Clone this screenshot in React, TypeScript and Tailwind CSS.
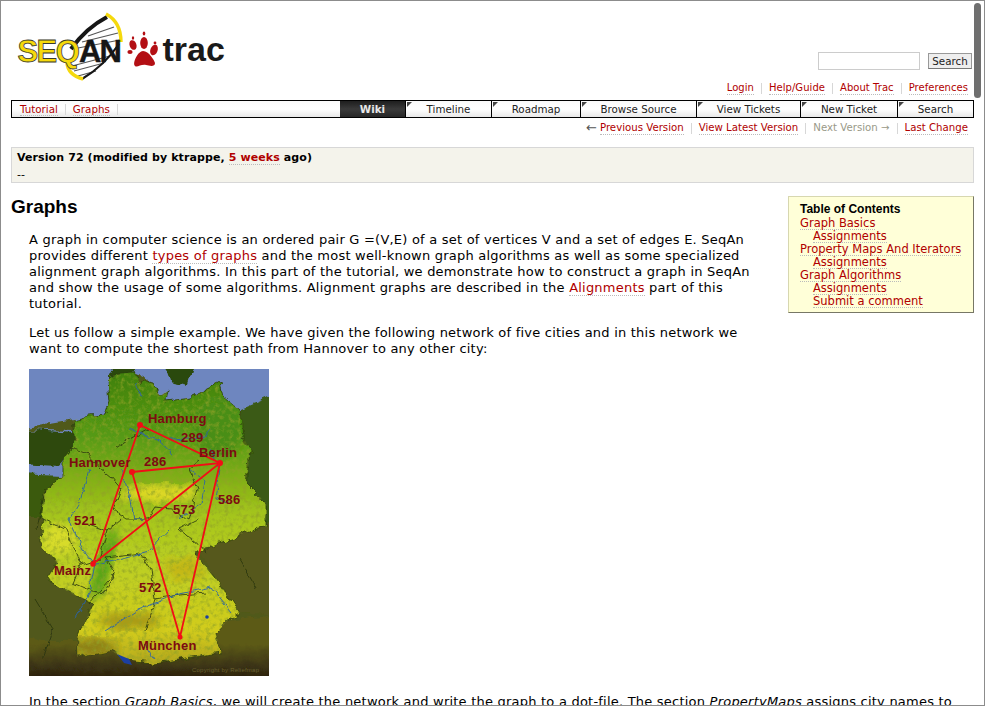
import React from "react";

const Lnk = ({ children, className = "" }: { children: React.ReactNode; className?: string }) => (
  <a className={"text-[#b00000] border-b border-dotted border-[#bbbbbb] " + className}>{children}</a>
);

function Logo() {
  return (
    <svg width="220" height="90" viewBox="11 5 220 90" className="block mt-[4px]">
      <path d="M72 47 Q88 28 107 17 L120 43 Q104 66 83 79 Q74 70 67 63 Z" fill="#fff" />
      <g stroke="#555" strokeWidth="1.1">
        <path d="M88 36 L114 27" /><path d="M82 42 L118 33" /><path d="M78 48 L120 40" /><path d="M72 66 L110 56" /><path d="M74 71 L104 63" /><path d="M78 76 L96 71" />
      </g>
      <path d="M71 49 Q86 28 107 17" fill="none" stroke="#161616" strokeWidth="4" />
      <path d="M119 44 Q104 66 82 79" fill="none" stroke="#161616" strokeWidth="2.2" />
      <path d="M106 14 Q121 22 121 42" fill="none" stroke="#f5d90c" strokeWidth="3.4" />
      <path d="M67 63 Q68 75 83 79" fill="none" stroke="#f5d90c" strokeWidth="3.4" />
      <text x="17.5" y="62" fontFamily="'Liberation Sans',sans-serif" fontWeight="700" fontSize="31" letterSpacing="-1.6" fill="#f5d90c" stroke="#3a3a2a" strokeWidth="0.8">SEQ</text>
      <text x="79" y="62" fontFamily="'Liberation Sans',sans-serif" fontWeight="700" fontSize="31" letterSpacing="-2" fill="#161616" stroke="#161616" strokeWidth="0.4">AN</text>
      <g fill="#b30f14">
        <path d="M143 51 C149 51 154 60 155 63 C155 67 150 66 146 65 C141 64 137 68 135 66 C132 63 138 51 143 51Z" />
        <ellipse cx="144" cy="43" rx="3.8" ry="6" />
        <ellipse cx="133" cy="45" rx="3.4" ry="5" transform="rotate(-20 133 45)" />
        <ellipse cx="154" cy="50" rx="3.6" ry="5.5" transform="rotate(20 154 50)" />
        <ellipse cx="130" cy="52" rx="2.6" ry="2" />
        <ellipse cx="144" cy="33.5" rx="1.3" ry="2" />
        <ellipse cx="133" cy="38" rx="1.2" ry="1.8" />
        <ellipse cx="155" cy="43" rx="1.4" ry="1.4" />
      </g>
      <text x="162.5" y="61" fontFamily="'Liberation Sans',sans-serif" fontWeight="700" fontSize="34" fill="#1a1a1a">trac</text>
    </svg>
  );
}

const land =
  "M44 51 L60 47 L76 46 L81 31 L79 11 L84 6 L104 4 L112 14 L124 14 L131 27 L139 21 L137 32 L161 29 L177 21 L191 14 L194 27 L211 41 L212 64 L221 81 L217 114 L237 134 L237 157 L229 158 L204 169 L171 181 L166 184 L191 214 L211 244 L199 251 L187 264 L191 284 L164 288 L124 294 L97 291 L81 281 L48 288 L48 271 L64 234 L41 224 L18 209 L28 194 L11 174 L14 151 L14 124 L34 107 L34 91 L47 71 Z";

function GermanyMap() {
  const bold = { fontFamily: "'Liberation Sans',sans-serif", fontWeight: 700 } as const;
  const L = (x: number, y: number, t: string) => (
    <text x={x} y={y} fontSize="13" fill="#7d0a12" {...bold}>{t}</text>
  );
  return (
    <svg width="240" height="307" viewBox="0 0 240 307" className="block">
      <defs>
        <linearGradient id="g" gradientUnits="userSpaceOnUse" x1="0" y1="0" x2="0" y2="307">
          <stop offset="0" stopColor="#3f7f10" />
          <stop offset="0.22" stopColor="#569a12" />
          <stop offset="0.36" stopColor="#82b016" />
          <stop offset="0.48" stopColor="#a6c61c" />
          <stop offset="0.64" stopColor="#bccf22" />
          <stop offset="0.85" stopColor="#d2cc1c" />
          <stop offset="1" stopColor="#a8981a" />
        </linearGradient>
        <linearGradient id="alps" gradientUnits="userSpaceOnUse" x1="0" y1="275" x2="0" y2="307">
          <stop offset="0" stopColor="#5c5a18" />
          <stop offset="1" stopColor="#2e2410" />
        </linearGradient>
        <filter id="noise" x="0" y="0" width="100%" height="100%">
          <feTurbulence type="fractalNoise" baseFrequency="0.22" numOctaves="4" seed="4" />
          <feColorMatrix values="0 0 0 0 0.28 0 0 0 0 0.36 0 0 0 0 0.02 0 0 0 1.8 -0.8" />
        </filter>
        <filter id="rough" x="-5%" y="-5%" width="110%" height="110%">
          <feTurbulence type="fractalNoise" baseFrequency="0.09" numOctaves="3" seed="7" result="t" />
          <feDisplacementMap in="SourceGraphic" in2="t" scale="9" xChannelSelector="R" yChannelSelector="G" />
        </filter>
        <filter id="wob" x="-5%" y="-5%" width="110%" height="110%">
          <feTurbulence type="fractalNoise" baseFrequency="0.12" numOctaves="2" seed="11" result="t" />
          <feDisplacementMap in="SourceGraphic" in2="t" scale="6" xChannelSelector="R" yChannelSelector="G" />
        </filter>
        <filter id="b"><feGaussianBlur stdDeviation="5" /></filter>
        <clipPath id="c"><path d={land} /></clipPath>
      </defs>
      <rect width="240" height="307" fill="#50591a" />
      <g filter="url(#rough)">
        <path d="M-10 -10 H250 V30 L211 41 L194 27 L191 14 L177 21 L161 29 L137 32 L131 27 L124 14 L104 4 L84 6 L79 11 L81 31 L76 46 L44 51 L-10 60 Z" fill="#6e86bf" />
        <path d="M-10 60 L44 62 L46 71 L34 91 L34 107 L-10 110Z" fill="#6e86bf" />
        <path d="M-10 60 L46 64 L46 90 L34 91 L30 97 L-10 95Z" fill="#2d4a0c" />
        <path d="M80 -10 L110 -10 L103 8 L84 8Z M133 -10 L168 -10 L160 16 L140 12Z" fill="#2c4a0c" />
        <path d="M212 40 L250 24 V170 L232 158 L237 134 L217 114 L221 81 L212 64Z" fill="#3a5a12" />
        <path d="M170 181 L250 150 V245 L211 244 L191 214Z" fill="#56581a" />
        <path d="M-10 317 V270 L48 271 L48 288 L81 281 L97 291 L124 294 L164 288 L191 284 L187 264 L199 251 L250 245 V317Z" fill="url(#alps)" />
        <path d="M-10 120 L14 124 L14 151 L11 174 L28 194 L18 209 L41 224 L64 234 L48 271 L-10 270Z" fill="#51591a" />
        <path d="M-10 105 L34 107 L14 124 L14 150 L-10 150Z" fill="#3a5a10" />
        <path d={land} fill="url(#g)" stroke="#2a3a0c" strokeWidth="0.8" />
        <g clipPath="url(#c)">
          <ellipse cx="75" cy="195" rx="8" ry="38" fill="#4fa014" filter="url(#b)" transform="rotate(15 75 195)" />
          <ellipse cx="130" cy="124" rx="40" ry="8" fill="#e2da28" filter="url(#b)" />
          <ellipse cx="60" cy="278" rx="28" ry="9" fill="#8c8016" filter="url(#b)" />
          <ellipse cx="100" cy="252" rx="30" ry="9" fill="#a89a18" filter="url(#b)" />
          <ellipse cx="155" cy="200" rx="20" ry="12" fill="#c4b816" filter="url(#b)" />
          <ellipse cx="190" cy="60" rx="24" ry="30" fill="#4a8e12" filter="url(#b)" />
          <ellipse cx="30" cy="170" rx="18" ry="16" fill="#d8dc2c" filter="url(#b)" />
        </g>
      </g>
      <g clipPath="url(#c)"><rect width="240" height="307" filter="url(#noise)" /></g>
      <g filter="url(#wob)">
        <g fill="none" stroke="#26340e" strokeWidth="0.8">
          <path d="M40 80 L58 84 L72 100 L82 108 L92 120 L84 140 L98 150 L118 150 L126 138 L142 140 L160 150 L168 120 L160 100 L170 92" />
          <path d="M60 155 L78 162 L92 150 M78 162 L70 190 L52 196 L44 214 L62 222 L76 224 L86 205 L76 188 L112 184 L122 200 L126 230 L116 262" />
          <path d="M126 230 L150 226 L178 224 M178 184 L150 160 L170 150 M120 60 L98 72 L86 80 M6 230 L24 260 L14 290 M210 190 L228 220 M16 120 L8 160" />
          <path d="M14 150 L36 160 L52 196 M60 235 L86 205" />
        </g>
        <g fill="none" stroke="#2b62a8" strokeWidth="0.9">
          <path d="M106 15 L112 28 M100 60 L130 72 L145 86 M140 70 L175 68 L182 60 M182 80 L190 100 L186 130 L200 132" />
          <path d="M92 100 L100 125 L104 150 L116 150 M60 100 L52 130 L40 150 L54 180 L66 195 L60 225 L46 250 M66 195 L90 190 L120 182 L140 160" />
          <path d="M76 262 L110 240 L150 225 L182 218 L202 244 M125 290 L115 275" />
          <path d="M160 100 L176 112 L172 135 L150 150" />
        </g>
      </g>
      <path d="M88 285 L100 290 L103 296 L95 294Z" fill="#1c3fa0" />
      <circle cx="178" cy="248" r="1.8" fill="#1c3fa0" />
      <text x="163" y="303" fontSize="6" fill="#6a6030" fontFamily="'Liberation Sans',sans-serif">Copyright by Reliefmap</text>
      <g stroke="#f20d16" strokeWidth="1.8" fill="none">
        <path d="M111 56 L191 94 L64 195 L111 56" />
        <path d="M103 103 L191 94 L151 268 L103 103" />
      </g>
      <g fill="#f20d16">
        <circle cx="111" cy="56" r="3" /><circle cx="191" cy="94" r="3" /><circle cx="103" cy="103" r="3" /><circle cx="64" cy="195" r="2.7" /><circle cx="151" cy="268" r="2.5" />
      </g>
      {L(119, 54, "Hamburg")}
      {L(152, 73, "289")}
      {L(170, 88, "Berlin")}
      {L(40, 98, "Hannover")}
      {L(115, 97, "286")}
      {L(189, 135, "586")}
      {L(144, 145, "573")}
      {L(45, 156, "521")}
      {L(25, 206, "Mainz")}
      {L(110, 223, "572")}
      {L(109, 281, "München")}
    </svg>
  );
}

const tabs: [string, string][] = [
  ["Timeline", "w-[85px]"],
  ["Roadmap", "w-[89px]"],
  ["Browse Source", "w-[116px]"],
  ["View Tickets", "w-[104px]"],
  ["New Ticket", "w-[97px]"],
  ["Search", "w-[76px]"],
];

const Sep = () => <span className="w-px h-[11px] bg-[#d7d7d7] mx-[7px]" />;

export default function App() {
  return (
    <div
      className="relative h-[706px] w-[985px] overflow-hidden border border-[#8c8c8c] bg-white px-[10px] text-black"
      style={{ fontFamily: "'DejaVu Sans',Verdana,sans-serif" }}
    >
      <div className="absolute right-[3px] top-[2px] h-[95px] w-[7px] rounded-full bg-[#6f6f6f]" />

      <header className="flex h-[99px] justify-between">
        <Logo />
        <div className="flex flex-col items-end pr-[6px] pt-[51px]">
          <div className="flex items-center">
            <input className="h-[18px] w-[102px] border border-[#cccccc] bg-white" />
            <button className="ml-2 mr-[-4px] h-[16px] w-[44px] border border-[#999] border-b-[#777] bg-[#eeeeee] text-[10.3px] leading-[14px] text-[#222]">
              Search
            </button>
          </div>
          <nav className="mt-[11px] flex items-center text-[10px] leading-[13px] tracking-[0.05px]">
            <Lnk>Login</Lnk><Sep /><Lnk>Help/Guide</Lnk><Sep /><Lnk>About Trac</Lnk><Sep /><Lnk>Preferences</Lnk>
          </nav>
        </div>
      </header>

      <nav className="flex h-[18px] border border-black bg-gradient-to-b from-[#fafafa] via-white to-[#e8e8e8] text-[10.3px] leading-[16px]">
        <div className="flex flex-1 items-center pl-[8px]">
          <Lnk className="leading-[12px]">Tutorial</Lnk>
          <span className="mx-[7px] h-[11px] w-px bg-[#d7d7d7]" />
          <Lnk className="leading-[12px]">Graphs</Lnk>
          <span className="ml-[7px] h-[11px] w-px bg-[#d7d7d7]" />
        </div>
        <div className="w-[66px] border-r border-black bg-gradient-to-b from-[#1e1e1e] via-[#3a3a3a] to-[#262626] text-center font-bold text-[#e8e8e8]">
          Wiki
        </div>
        {tabs.map(([t, w], i) => (
          <div key={t} className={"relative text-center text-[#222] " + w + (i ? " border-l border-black" : "")}>
            <span className="absolute left-[1px] top-[1px] h-0 w-0 border-r-[5px] border-t-[5px] border-r-transparent border-t-[#444]" />
            {t}
          </div>
        ))}
      </nav>

      <nav className="mt-[2px] flex h-[16px] items-center justify-end pr-[6px] text-[10.2px] leading-[12px]">
        <span className="mr-[3px] text-[13px] text-[#555]">←</span>
        <Lnk>Previous Version</Lnk><Sep /><Lnk>View Latest Version</Lnk><Sep />
        <span className="text-[#999988]">Next Version →</span><Sep /><Lnk>Last Change</Lnk>
      </nav>

      <section className="mt-[11px] h-[36px] border border-[#d7d7d7] bg-[#f4f3eb] px-[5px] pt-[2px] text-[11px] leading-[16px] tracking-[0.1px]">
        <p className="font-bold">
          Version 72 (modified by ktrappe, <Lnk>5 weeks</Lnk> ago)
        </p>
        <p className="mt-[1px]">--</p>
      </section>

      <div className="flex items-start">
        <main className="min-w-0 flex-1">
          <h1 className="mt-[12px] text-[19px] font-bold leading-[24px]" style={{ fontFamily: "'Liberation Sans',sans-serif" }}>
            Graphs
          </h1>
          <div className="pl-[18px] text-[13px] leading-[16px] tracking-[0.22px]">
            <p className="mt-[13px] whitespace-nowrap">
              A graph in computer science is an ordered pair G =(V,E) of a set of vertices V and a set of edges E. SeqAn<br />
              provides different <Lnk>types of graphs</Lnk> and the most well-known graph algorithms as well as some specialized<br />
              alignment graph algorithms. In this part of the tutorial, we demonstrate how to construct a graph in SeqAn<br />
              and show the usage of some algorithms. Alignment graphs are described in the <Lnk>Alignments</Lnk> part of this<br />
              tutorial.
            </p>
            <p className="mt-[13px] whitespace-nowrap">
              Let us follow a simple example. We have given the following network of five cities and in this network we<br />
              want to compute the shortest path from Hannover to any other city:
            </p>
            <div className="mt-[12px]"><GermanyMap /></div>
            <p className="mt-[18px] whitespace-nowrap">
              In the section <i>Graph Basics</i>, we will create the network and write the graph to a dot-file. The section <i>PropertyMaps</i> assigns city names to
            </p>
          </div>
        </main>
        <aside className="mt-[13px] h-[117px] w-[186px] shrink-0 border border-[#d7d7b0] border-b-[#777766] border-r-[#777766] bg-[#ffffd8] pl-[11px] pt-[5px] text-[11.5px] leading-[12px]">
          <h4 className="font-bold text-[12px] leading-[14px]" style={{ fontFamily: "'Liberation Sans',sans-serif" }}>Table of Contents</h4>
          <div className="mt-[1px] flex flex-col items-start">
            <Lnk>Graph Basics</Lnk>
            <Lnk className="ml-[13px]">Assignments</Lnk>
            <Lnk>Property Maps And Iterators</Lnk>
            <Lnk className="ml-[13px]">Assignments</Lnk>
            <Lnk>Graph Algorithms</Lnk>
            <Lnk className="ml-[13px]">Assignments</Lnk>
            <Lnk className="ml-[13px]">Submit a comment</Lnk>
          </div>
        </aside>
      </div>
    </div>
  );
}
